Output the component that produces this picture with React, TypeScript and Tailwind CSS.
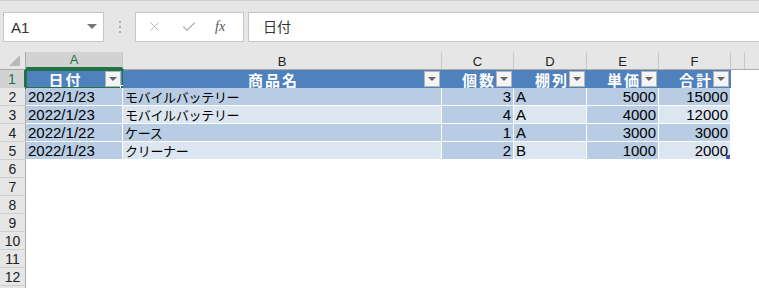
import React from 'react';
import { X, Check } from 'lucide-react';

const FONT = '"Liberation Sans", "Noto Sans CJK JP", sans-serif';
const JP = '"Noto Sans CJK JP", "Liberation Sans", sans-serif';

const cols = [
  { key: 'A', w: 97 },
  { key: 'B', w: 319 },
  { key: 'C', w: 72 },
  { key: 'D', w: 73 },
  { key: 'E', w: 72 },
  { key: 'F', w: 72 },
];

const headers = [
  { label: '日付', align: 'center' },
  { label: '商品名', align: 'center' },
  { label: '個数', align: 'right' },
  { label: '棚列', align: 'right' },
  { label: '単価', align: 'right' },
  { label: '合計', align: 'right' },
];

const data = [
  ['2022/1/23', 'モバイルバッテリー', '3', 'A', '5000', '15000'],
  ['2022/1/23', 'モバイルバッテリー', '4', 'A', '4000', '12000'],
  ['2022/1/22', 'ケース', '1', 'A', '3000', '3000'],
  ['2022/1/23', 'クリーナー', '2', 'B', '1000', '2000'],
];

const rightCols = [2, 4, 5];

function FilterButton() {
  return (
    <div className="w-[16px] h-[16px] shrink-0 bg-[#f4f4f4] border border-[#b4b4b4] flex items-center justify-center mr-[2px]">
      <div className="w-0 h-0 border-l-[4px] border-r-[4px] border-t-[4px] border-l-transparent border-r-transparent border-t-[#666666]" />
    </div>
  );
}

function RowHeader({ n, active }: { n?: number; active?: boolean }) {
  return (
    <div
      className={
        'w-[26px] h-[18px] shrink-0 flex items-center justify-center text-[14px] leading-none border-b border-[#cfcfcf] ' +
        (active
          ? 'bg-[#d2d2d2] text-[#217346] border-r-2 border-r-[#217346]'
          : 'bg-[#e6e6e6] text-[#222] border-r border-r-[#ababab]')
      }
    >
      {n}
    </div>
  );
}

export default function App() {
  return (
    <div className="w-[759px] h-[288px] overflow-hidden bg-white" style={{ fontFamily: FONT }}>
      {/* formula bar */}
      <div className="h-[52px] bg-[#e6e6e6] border-t border-[#d0d0d0] flex items-center">
        <div className="ml-[3px] w-[101px] h-[30px] bg-white border border-[#c6c6c6] flex items-center justify-between pl-[7px] pr-[6px]">
          <span className="text-[15px] text-[#333] mt-[4px]">A1</span>
          <div className="w-0 h-0 border-l-[5px] border-r-[5px] border-t-[5px] border-l-transparent border-r-transparent border-t-[#777]" />
        </div>
        <div className="w-[31px] flex flex-col items-center gap-[3px]">
          <div className="w-[2px] h-[2px] bg-[#aaa]" />
          <div className="w-[2px] h-[2px] bg-[#aaa]" />
          <div className="w-[2px] h-[2px] bg-[#aaa]" />
        </div>
        <div className="w-[109px] h-[30px] bg-white border border-[#c6c6c6] flex items-center">
          <X size={15} strokeWidth={1.6} className="text-[#b4b4b4] ml-[11px]" />
          <Check size={16} strokeWidth={2} className="text-[#b4b4b4] ml-[19px]" />
          <span
            className="ml-[18px] text-[14px] italic text-[#555]"
            style={{ fontFamily: '"Liberation Serif", serif' }}
          >
            fx
          </span>
        </div>
        <div className="ml-[4px] flex-1 h-[30px] bg-white border border-[#c6c6c6] border-r-0 flex items-center pl-[14px]">
          <span className="text-[14px] text-[#333]" style={{ fontFamily: JP }}>
            日付
          </span>
        </div>
      </div>

      {/* column headers */}
      <div className="flex h-[18px] bg-[#e6e6e6] border-b border-[#ababab]">
        <div className="w-[26px] shrink-0 border-r border-[#ababab] relative overflow-hidden">
          <div
            className="absolute right-[5px] bottom-[3px] w-[11px] h-[11px] bg-[#b8b8b8]"
            style={{ clipPath: 'polygon(100% 0, 100% 100%, 0 100%)' }}
          />
        </div>
        {cols.map((c, i) => (
          <div
            key={c.key}
            className={
              'shrink-0 flex items-end justify-center pb-[1px] text-[13px] leading-none border-r border-[#c8c8c8] ' +
              (i === 0 ? 'bg-[#d2d2d2] text-[#217346] border-b-2 border-b-[#217346]' : 'text-[#222]')
            }
            style={{ width: c.w }}
          >
            {c.key}
          </div>
        ))}
        <div className="w-[14px] shrink-0 border-r border-[#c8c8c8]" />
      </div>

      {/* row 1: table header */}
      <div className="flex">
        <RowHeader n={1} active />
        {headers.map((h, i) => (
          <div
            key={h.label}
            className="shrink-0 h-[18px] bg-[#4f81bd] flex items-center relative"
            style={{ width: cols[i].w }}
          >
            <span
              className={
                'flex-1 text-white font-bold text-[15px] tracking-[2px] leading-none ' +
                (h.align === 'center' ? 'text-center' : 'text-right')
              }
              style={{ fontFamily: JP }}
            >
              {h.label}
            </span>
            <FilterButton />
            {i === 0 && (
              <>
                <div className="absolute -left-[1px] -top-[1px] -right-[1px] -bottom-[1px] border-2 border-[#217346] pointer-events-none" />
                <div className="absolute -right-[3px] -bottom-[3px] w-[6px] h-[6px] bg-[#217346] border border-white" />
              </>
            )}
          </div>
        ))}
      </div>

      {/* data rows */}
      {data.map((row, r) => (
        <div key={r} className="flex">
          <RowHeader n={r + 2} />
          {row.map((v, i) => {
            const dark = r % 2 === 0 || i % 2 === 0;
            const right = rightCols.includes(i);
            const jp = i === 1;
            return (
              <div
                key={i}
                className={
                  'shrink-0 h-[18px] flex items-center border-b border-r border-white text-[15px] leading-none text-black relative ' +
                  (dark ? 'bg-[#b8cce4] ' : 'bg-[#dce6f1] ') +
                  (right ? 'justify-end pr-[2px]' : 'justify-start pl-[2px]')
                }
                style={{ width: cols[i].w }}
              >
                <span
                  className={jp ? 'text-[13px] tracking-[-0.3px] leading-none' : 'leading-none'}
                  style={jp ? { fontFamily: JP } : undefined}
                >
                  {v}
                </span>
                {r === data.length - 1 && i === 5 && (
                  <div className="absolute right-0 bottom-0 w-[4px] h-[4px] bg-[#3f51b5]" />
                )}
              </div>
            );
          })}
        </div>
      ))}

      {/* empty rows */}
      {[6, 7, 8, 9, 10, 11, 12].map((n) => (
        <div key={n} className="flex">
          <RowHeader n={n} />
        </div>
      ))}
      <div className="flex">
        <RowHeader />
      </div>
    </div>
  );
}
